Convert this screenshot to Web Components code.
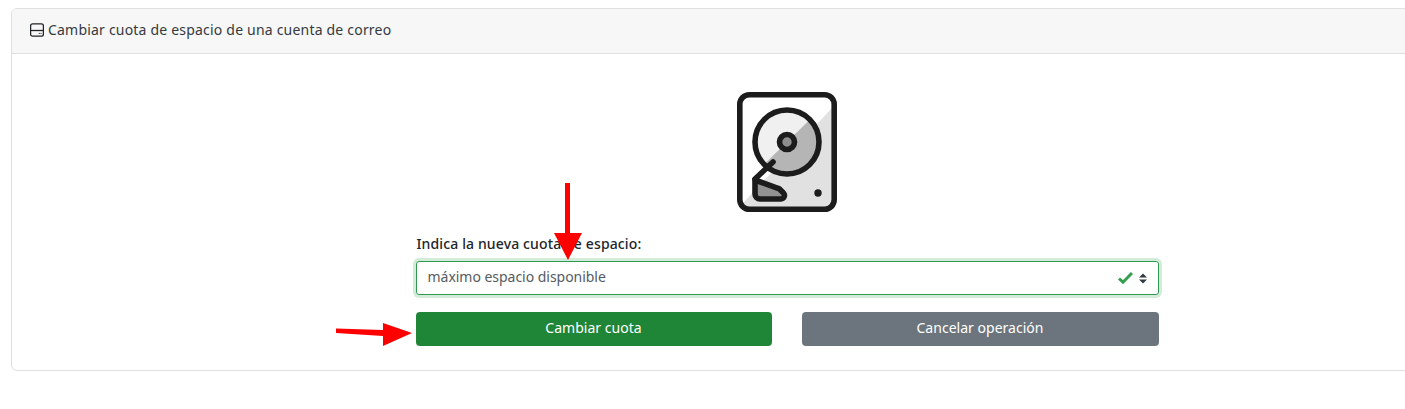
<!DOCTYPE html>
<html lang="es"><head><meta charset="utf-8"><title>Cambiar cuota</title>
<style>
html,body{margin:0;padding:0;height:409px;width:1405px;overflow:hidden;background:#fff}
body{font-family:"Noto Sans","Lato",sans-serif;color:#212529;position:relative}
</style></head><body>
<quota-card>
  <span slot="title">Cambiar cuota de espacio de una cuenta de correo</span>
  <disk-art></disk-art>
  <quota-form></quota-form>
</quota-card>
<red-arrow style="left:335px;top:322px" kind="h"></red-arrow>
<red-arrow style="left:553px;top:182px" kind="v"></red-arrow>
<script>
function def(name,html){
  customElements.define(name,class extends HTMLElement{
    constructor(){super();this.attachShadow({mode:'open'}).innerHTML=typeof html==='function'?html(this):html;}
  });
}
def('quota-card',`<style>
:host{display:block;box-sizing:border-box;width:1552px;height:363px;margin:8px 0 0 11px;border:1px solid #dfdfdf;border-radius:6px;background:#fff}
header{box-sizing:border-box;height:45px;background:#f7f7f7;border-bottom:1px solid #dfdfdf;border-radius:5px 5px 0 0;display:flex;align-items:center;gap:4px;padding:0 0 4px 18px;font-size:14px;letter-spacing:.2px;color:#343a40}
svg{width:14px;height:14px;flex:none;margin-top:2px}
main{display:flex;flex-direction:column;align-items:center;padding-top:38px}
</style>
<header><svg viewBox="0 0 14 14"><rect x=".6" y=".8" width="12.800" height="12.400" rx="2" fill="none" stroke="#212529" stroke-width="1.300"/><path d="M1 7.500H13" stroke="#212529" stroke-width="1.300"/><circle cx="9.300" cy="10.300" r=".6" fill="#212529"/><circle cx="11" cy="10.300" r=".6" fill="#212529"/></svg><slot name="title"></slot></header>
<main><slot></slot></main>`);
def('disk-art',`<style>:host{display:block;width:100px;height:120px}svg{display:block}</style>
<svg width="100" height="120" viewBox="0 0 100 120">
<rect x="3" y="3" width="94" height="114" rx="9" fill="#fff"/>
<path d="M95 16V110a5 5 0 0 1-5 5H8a3 3 0 0 1-3-3z" fill="#e1e1e1"/>
<circle cx="50" cy="50" r="32" fill="#f0f0f0"/>
<path d="M73 27.500A32 32 0 0 1 27 72.500z" fill="#b5b5b5"/>
<g fill="none" stroke="#1c1c1c" stroke-width="5.600" stroke-linecap="round" stroke-linejoin="round">
<rect x="2.800" y="2.800" width="94.400" height="114.400" rx="9.500"/>
<circle cx="50" cy="50" r="32"/>
<circle cx="50" cy="50" r="7.500" fill="#8e8e8e"/>
<path d="M36 70 18 87"/>
<path d="M18 88V102a5 5 0 0 0 5 5H44a3.600 3.600 0 0 0 2.500-6L43 97.500a4 4 0 0 0-2-1.200z" fill="#929292"/>
</g>
<circle cx="81" cy="101" r="3.700" fill="#1c1c1c"/>
</svg>`);
def('quota-form',`<style>
:host{display:block;width:743px;margin-top:22px;font-size:14px}
label{display:block;color:#212529;line-height:20px;height:27px;font-weight:500;letter-spacing:.13px;padding-left:1px}
.sel{box-sizing:border-box;height:34px;border:1px solid #2f9a4f;border-radius:3px;box-shadow:0 0 0 3px #d3ecd9;display:flex;align-items:center;padding:0 11px 0;color:#555b61;gap:6px}
.sel span{flex:1;margin-top:-4px;letter-spacing:-.03px}
.btns{display:grid;grid-template-columns:356px 357px;gap:30px;margin-top:17px}
button{font:inherit;letter-spacing:.02px;height:34px;border:0;border-radius:4px;color:#fff;padding:0 0 3px}
.a{background:#1f8638}.b{background:#6c757d}
</style>
<label>Indica la nueva cuota de espacio:</label>
<div class="sel"><span>máximo espacio disponible</span>
<svg width="15" height="12" viewBox="0 0 15 12"><path d="M1 6.500 5 10.200 14 1" fill="none" stroke="#34a04f" stroke-width="3"/></svg>
<svg width="8" height="11" viewBox="0 0 8 11" fill="#343a40"><path d="M4 0.500 8 4.600H0zM0 6.400H8L4 10.500z"/></svg></div>
<div class="btns"><button class="a">Cambiar cuota</button><button class="b">Cancelar operación</button></div>`);
def('red-arrow',el=>el.getAttribute('kind')==='h'?
`<style>:host{position:absolute;display:block;width:80px;height:30px}svg{display:block}</style>
<svg width="80" height="30" viewBox="0 0 80 30"><path d="M1 6.500 48 8V1L77 11 48 24V14L1 11z" fill="#f00"/></svg>`:
`<style>:host{position:absolute;display:block;width:30px;height:80px}svg{display:block}</style>
<svg width="30" height="80" viewBox="0 0 30 80"><path d="M12 1H17V51H29L15 78 1 51H12z" fill="#f00"/></svg>`);
</script>
</body></html>
